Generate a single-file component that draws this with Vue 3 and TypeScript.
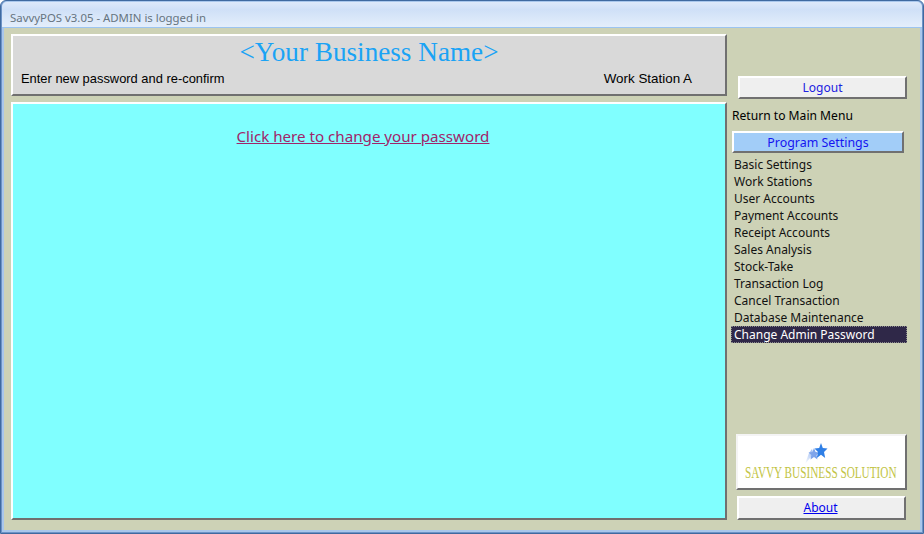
<template>
  <div class="window">
    <div class="titlebar">SavvyPOS v3.05 - ADMIN is logged in</div>
    <div class="client">
      <!-- left side -->
      <div class="left">
        <div class="header panel">
          <div class="biz">&lt;Your Business Name&gt;</div>
          <div class="subline">
            <span>Enter new password and re-confirm</span>
            <span class="station">Work Station A</span>
          </div>
        </div>
        <div class="main panel">
          <a class="change-link" href="#" @click.prevent>Click here to change your password</a>
        </div>
      </div>

      <!-- right side menu -->
      <div class="side">
        <button class="btn logout">Logout</button>
        <div class="return">Return to Main Menu</div>
        <div class="btn settings">Program Settings</div>
        <ul class="menu">
          <li v-for="item in menu" :key="item" :class="{ active: item === current }">{{ item }}</li>
        </ul>
        <div class="logo">
          <svg class="stars" width="24" height="22" viewBox="0 0 24 22">
            <defs>
              <linearGradient id="tail" x1="0" y1="1" x2="1" y2="0">
                <stop offset="0" stop-color="#ffffff" />
                <stop offset="1" stop-color="#8fb2f0" />
              </linearGradient>
            </defs>
            <path d="M1 21 L5 10 L8 6 L10 13 L6 15 Z" fill="url(#tail)" />
            <path d="M10 5 L11.6 9 L15.5 9.5 L12.6 12 L13.4 16.5 L10 14 L6.5 16.5 L7.4 12 L4.5 9.5 L8.4 9 Z" fill="#7ea4ea" />
            <path d="M17 0 L18.8 5 L23.5 5.5 L20 9 L21.2 15 L17 11.8 L12.8 15 L14 9 L10.5 5.5 L15.2 5 Z" fill="#2f7fe6" />
          </svg>
          <div class="logo-text">SAVVY BUSINESS SOLUTION</div>
        </div>
        <div class="btn about"><a href="#" @click.prevent>About</a></div>
      </div>
    </div>
  </div>
</template>

<script setup lang="ts">
const menu: string[] = [
  'Basic Settings',
  'Work Stations',
  'User Accounts',
  'Payment Accounts',
  'Receipt Accounts',
  'Sales Analysis',
  'Stock-Take',
  'Transaction Log',
  'Cancel Transaction',
  'Database Maintenance',
  'Change Admin Password'
]
const current = 'Change Admin Password'
</script>

<style>
html, body {
  margin: 0;
  padding: 0;
  overflow: hidden;
}
</style>

<style scoped>
.window {
  box-sizing: border-box;
  width: 924px;
  height: 534px;
  display: flex;
  flex-direction: column;
  background: #a9c7ec;
  border: 1px solid #3f6aa0;
  border-radius: 6px 6px 0 0;
  padding: 0 3px 3px 3px;
  box-shadow: inset 1px 0 0 #6d93c6, inset -1px 0 0 #6d93c6, inset 0 -1px 0 #6d93c6;
  font-family: "Noto Sans", Tahoma, sans-serif;
}

/* title bar */
.titlebar {
  height: 25px;
  margin: 1px -2px 0;
  padding: 0 8px;
  line-height: 31px;
  font-size: 11.4px;
  color: #66747f;
  border-bottom: 1px solid #9cc4f0;
  border-radius: 5px 5px 0 0;
  background: linear-gradient(to bottom, #dde9fa 0, #cfe0f7 30%, #e4eefb 100%);
}

.client {
  flex: 1;
  display: flex;
  background: #cdd2b6;
  padding: 6px 0 0 7px;
  min-height: 0;
}

.panel {
  box-sizing: border-box;
  border: 2px solid;
  border-color: #ffffff #707070 #707070 #ffffff;
}

.left {
  width: 716px;
  display: flex;
  flex-direction: column;
  gap: 6px;
}

.header {
  height: 62px;
  background: #d9d9d9;
  font-family: "Liberation Sans", Arial, sans-serif;
}

.biz {
  height: 32px;
  line-height: 32px;
  text-align: center;
  font-family: "Liberation Serif", "Times New Roman", serif;
  font-size: 27.2px;
  color: #1aa3f5;
}

.subline {
  display: flex;
  padding-left: 8px;
  margin-top: 3px;
  font-size: 12.9px;
  color: #000;
  line-height: 16px;
}

.station {
  margin-left: auto;
  margin-right: 33px;
  font-size: 13.4px;
}

.main {
  height: 418px;
  background: #80ffff;
  padding: 21px 12px 0 0;
  text-align: center;
}

.change-link {
  font-size: 15.15px;
  color: #a0256a;
  text-decoration: underline;
}

/* right menu */
.side {
  flex: 1;
  display: flex;
  flex-direction: column;
  font-size: 12px;
  color: #000;
  padding-left: 5px;
}

.btn {
  box-sizing: border-box;
  display: block;
  border: 2px solid;
  border-color: #ffffff #707070 #707070 #ffffff;
  background: #efefef;
  font-family: inherit;
  font-size: 12px;
  text-align: center;
  color: #2020e0;
  padding: 0;
}

.logout {
  width: 169px;
  height: 23px;
  margin: 42px 0 0 6px;
}

.return {
  margin-top: 8px;
  height: 17px;
  line-height: 17px;
  font-size: 12.1px;
}

.settings {
  width: 172px;
  height: 22px;
  line-height: 20px;
  margin-top: 7px;
  background: #a2cdf8;
  color: #1515f0;
  font-size: 12.4px;
}

.menu {
  list-style: none;
  margin: 3px 0 0;
  padding: 0;
  width: 175px;
}

.menu li {
  box-sizing: border-box;
  height: 17px;
  line-height: 17px;
  padding-left: 2px;
  white-space: nowrap;
  color: #111;
}

.menu li.active {
  background: #2f2848;
  color: #fff;
  margin-left: -1px;
  padding-left: 3px;
  outline: 1px dotted #8a8a8a;
  outline-offset: -1px;
}

.logo {
  box-sizing: border-box;
  width: 171px;
  height: 56px;
  margin: 91px 0 0 4px;
  border: 2px solid;
  border-color: #f4f4f4 #707070 #707070 #f4f4f4;
  background: #fff;
  display: flex;
  flex-direction: column;
  align-items: center;
}

.stars {
  margin-top: 7px;
  margin-right: 11px;
}

.logo-text {
  margin-top: -1px;
  margin-right: 2px;
  font-family: "Liberation Serif", serif;
  font-size: 17px;
  line-height: 18px;
  color: #c2c445;
  white-space: nowrap;
  transform: scaleX(0.66);
}

.about {
  width: 169px;
  height: 24px;
  line-height: 20px;
  margin: 6px 0 0 5px;
  padding-right: 2px;
}

.about a {
  color: #0000ee;
  text-decoration: underline;
}
</style>
